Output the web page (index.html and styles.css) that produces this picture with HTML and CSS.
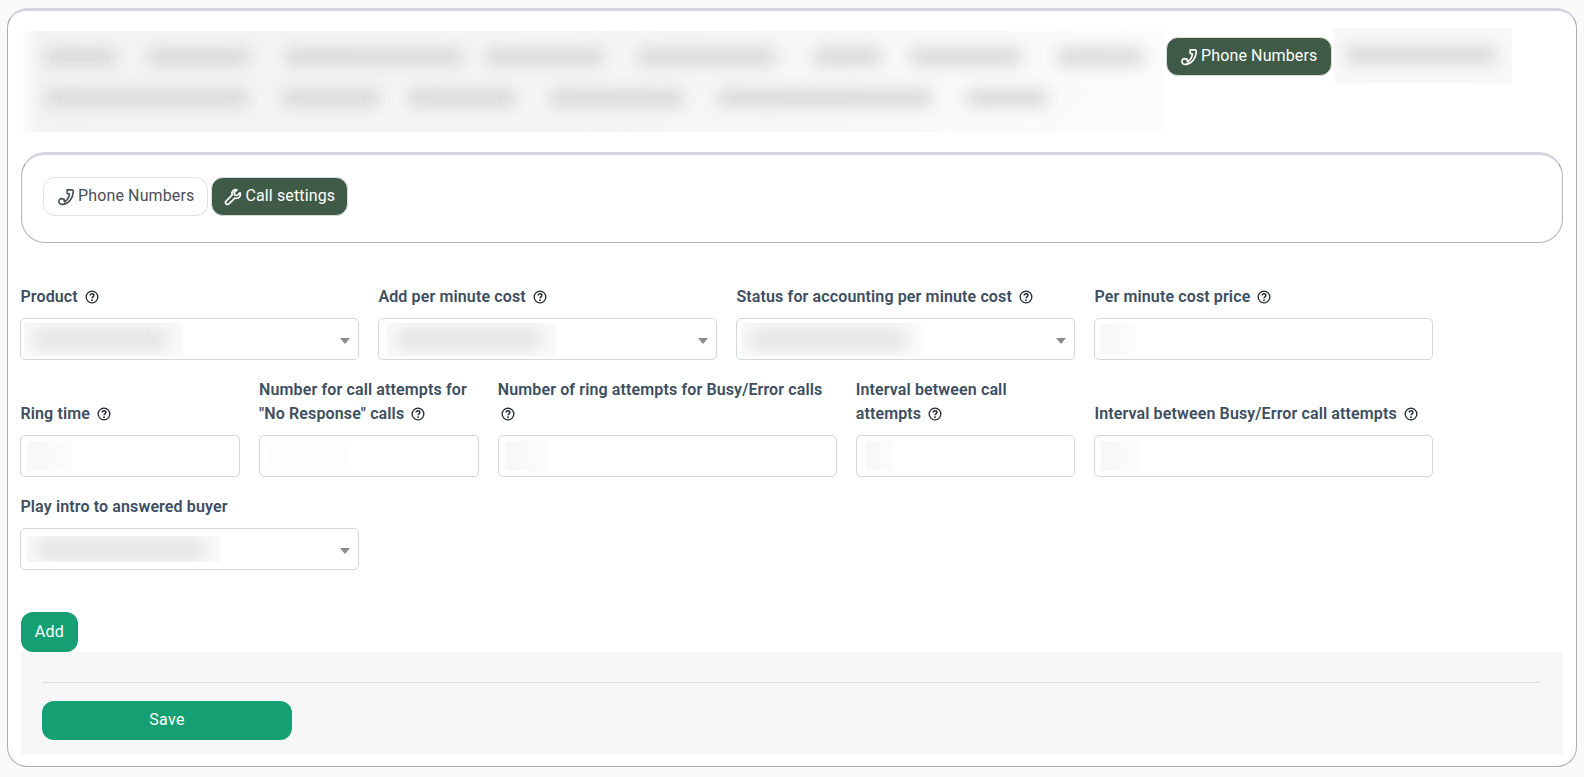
FILE: index.html
```html
<!DOCTYPE html>
<html lang="en">
<head>
<meta charset="utf-8">
<title>Phone Numbers - Call settings</title>
<link rel="stylesheet" href="styles.css">
</head>
<body>
<svg class="defs" width="0" height="0" aria-hidden="true">
  <symbol id="i-phone" viewBox="0 0 24 24"><path d="M13.500 2.500 19.500 2.300C21 2.300 21.800 3.300 21.700 4.800 21.300 13.500 15.800 20.800 8 21.800 4.500 22.200 2.200 20.400 2.600 17.500 2.800 16 3.500 14.900 4.700 14.200L9.300 14.600 10 18.300C13.600 16.500 16 12.500 16.600 8.200L13.700 7.400z" fill="none" stroke="currentColor" stroke-width="2.200" stroke-linejoin="round"/></symbol>
  <symbol id="i-wrench" viewBox="0 0 24 24"><path d="M21.500 6.300 17.500 10l-3.300-.6-.7-3.300 3.800-3.700c-3.100-1-6.400 1-6.700 4.200-.1.900 0 1.800.4 2.600L2.800 17.400c-1 1-1 2.600 0 3.700s2.700 1 3.700 0l8.300-7.800c.8.400 1.700.5 2.600.4 3.200-.3 5.200-3.400 4.100-7.400z" fill="none" stroke="currentColor" stroke-width="2.200" stroke-linejoin="round"/></symbol>
  <symbol id="i-help" viewBox="0 0 24 24"><circle cx="12" cy="12" r="10" fill="none" stroke="currentColor" stroke-width="2.200"/><path d="M8.800 9.500c0-1.900 1.400-3.100 3.200-3.100s3.200 1.200 3.200 2.900c0 2.400-3.200 2.500-3.200 5" fill="none" stroke="currentColor" stroke-width="2.400"/><circle cx="12" cy="17.500" r="1.500" fill="currentColor"/></symbol>
</svg>
<main class="card">
  <nav class="topnav">
    <div class="smudge-box" aria-hidden="true">
      <div class="smudge-row">
        <i class="sb w70"></i><i class="sb w100 g34"></i><i class="sb w176 g37"></i><i class="sb w116 g25"></i><i class="sb w136 g36"></i><i class="sb w66 g40"></i><i class="sb w110 g30"></i><i class="sb w86 g36"></i>
      </div>
      <div class="smudge-row">
        <i class="sb w202"></i><i class="sb w96 g36"></i><i class="sb w106 g30"></i><i class="sb w132 g36"></i><i class="sb w212 g36"></i><i class="sb w80 g36"></i>
      </div>
    </div>
    <a class="btn btn-dark nav-btn"><svg class="ico"><use href="#i-phone"/></svg><span class="btn-text">Phone Numbers</span></a>
    <div class="smudge-box-small" aria-hidden="true"><i class="sb w150"></i></div>
  </nav>

  <section class="panel">
    <a class="btn btn-light"><svg class="ico"><use href="#i-phone"/></svg><span class="btn-text">Phone Numbers</span></a>
    <a class="btn btn-dark"><svg class="ico"><use href="#i-wrench"/></svg><span class="btn-text">Call settings</span></a>
  </section>

  <form class="form-grid">
    <div class="field span3">
      <label class="lbl">Product <svg class="help"><use href="#i-help"/></svg></label>
      <div class="control"><span class="mask m-sel1"><i></i></span><span class="caret"></span></div>
    </div>
    <div class="field span3">
      <label class="lbl">Add per minute cost <svg class="help"><use href="#i-help"/></svg></label>
      <div class="control"><span class="mask m-sel2"><i></i></span><span class="caret"></span></div>
    </div>
    <div class="field span3">
      <label class="lbl">Status for accounting per minute cost <svg class="help"><use href="#i-help"/></svg></label>
      <div class="control"><span class="mask m-sel3"><i></i></span><span class="caret"></span></div>
    </div>
    <div class="field span3">
      <label class="lbl">Per minute cost price <svg class="help"><use href="#i-help"/></svg></label>
      <div class="control"><span class="mask faint m-in1"></span></div>
    </div>

    <div class="field span2">
      <label class="lbl">Ring time <svg class="help"><use href="#i-help"/></svg></label>
      <div class="control"><span class="mask faint m-in2"></span></div>
    </div>
    <div class="field span2">
      <label class="lbl">Number for call attempts for "No Response" calls <svg class="help"><use href="#i-help"/></svg></label>
      <div class="control"><span class="mask fainter m-in3"></span></div>
    </div>
    <div class="field span3">
      <label class="lbl">Number of ring attempts for Busy/Error calls <svg class="help"><use href="#i-help"/></svg></label>
      <div class="control"><span class="mask faint m-in4"></span></div>
    </div>
    <div class="field span2">
      <label class="lbl">Interval between call attempts <svg class="help"><use href="#i-help"/></svg></label>
      <div class="control"><span class="mask faint m-in5"></span></div>
    </div>
    <div class="field span3">
      <label class="lbl">Interval between Busy/Error call attempts <svg class="help"><use href="#i-help"/></svg></label>
      <div class="control"><span class="mask faint m-in6"></span></div>
    </div>

    <div class="field span3">
      <label class="lbl">Play intro to answered buyer</label>
      <div class="control"><span class="mask m-sel4"><i></i></span><span class="caret"></span></div>
    </div>
  </form>

  <button class="btn-green add-btn" type="button">Add</button>

  <footer class="actions">
    <hr class="rule">
    <button class="btn-green save-btn" type="button">Save</button>
  </footer>
</main>
</body>
</html>
```

FILE: styles.css
```css
* { box-sizing: border-box; }

html, body { margin: 0; height: 100%; }

body {
  background: #fafafa;
  padding: 8px 7px 0;
  font-family: Roboto, "Liberation Sans", sans-serif;
  color: #3a4b5c;
  overflow: hidden;
}

.defs { position: absolute; }

.card {
  width: 1570px;
  height: 759px;
  background: #fff;
  border: 1px solid #adadad;
  border-top: 3px solid #d4d6df;
  border-radius: 20px;
  padding: 17px 13px 0;
}

/* top navigation */
.topnav {
  display: flex;
  align-items: flex-start;
  height: 109px;
}

.smudge-box {
  width: 1141px;
  height: 101px;
  margin: 3px 2px 0 2px;
  background: linear-gradient(135deg, #f3f3f3 0%, #f5f5f5 55%, #fcfcfc 100%);
  box-shadow: inset 16px 0 12px -8px #fcfcfc;
  overflow: hidden;
  padding: 18px 22px 0;
}

.smudge-row {
  display: flex;
  height: 16px;
  margin-bottom: 25px;
}

.sb {
  display: block;
  height: 16px;
  background: #d6d6d6;
  filter: blur(8px);
  flex: none;
}

.w66 { width: 66px; } .w70 { width: 70px; } .w80 { width: 80px; } .w86 { width: 86px; }
.w96 { width: 96px; } .w100 { width: 100px; } .w106 { width: 106px; } .w110 { width: 110px; }
.w116 { width: 116px; } .w132 { width: 132px; } .w136 { width: 136px; } .w150 { width: 150px; }
.w176 { width: 176px; } .w202 { width: 202px; } .w212 { width: 212px; }
.g25 { margin-left: 25px; } .g30 { margin-left: 30px; } .g34 { margin-left: 34px; }
.g36 { margin-left: 36px; } .g37 { margin-left: 37px; } .g40 { margin-left: 40px; }

.smudge-box-small {
  width: 178px;
  height: 55px;
  margin-left: 2px;
  background: #f8f8f8;
  overflow: hidden;
  padding: 19px 12px 0;
}

/* buttons */
.btn {
  display: inline-flex;
  align-items: center;
  height: 39px;
  padding: 0 13px;
  border-radius: 12px;
  font-size: 16px;
  line-height: 1;
  flex: none;
}

.btn-text {
  letter-spacing: 0.13px;
  padding-bottom: 2px;
}

.btn-dark {
  background: #3f5b47;
  color: #fff;
  border: 1px solid #d8dcd9;
}

.btn-light {
  background: #fff;
  color: #4a4f55;
  border: 1px solid #dfdfe4;
}

.nav-btn {
  margin-top: 9px;
  padding-right: 14px;
}

.ico {
  width: 18px;
  height: 18px;
  margin-right: 3px;
  flex: none;
}

/* sub tabs panel */
.panel {
  display: flex;
  gap: 3px;
  height: 91px;
  margin-top: 15px;
  padding: 22px 21px 0;
  border: 1px solid #b4b4b8;
  border-top: 3px solid #d4d6df;
  border-radius: 24px;
}

.panel .btn-dark { padding: 0 12px; }

/* form */
.form-grid {
  display: grid;
  grid-template-columns: repeat(12, 1fr);
  column-gap: 19px;
  row-gap: 17px;
  width: 1413px;
  margin: 41px 0 0 -0.6px;
}

.field {
  display: flex;
  flex-direction: column;
  justify-content: flex-end;
}

.span2 { grid-column: span 2; }
.span3 { grid-column: span 3; }

.lbl {
  display: block;
  font-size: 16px;
  font-weight: 600;
  letter-spacing: 0.13px;
  line-height: 24px;
  padding-top: 1px;
  margin-bottom: 9px;
  color: #3d4e5f;
}

.help {
  width: 14px;
  height: 14px;
  margin-left: 3px;
  vertical-align: -2px;
  color: #20262c;
}

.control {
  display: flex;
  align-items: center;
  height: 42px;
  border: 1px solid #d4d6de;
  border-radius: 5px;
  background: #fff;
  overflow: hidden;
}

.caret {
  margin-left: auto;
  margin-right: 8px;
  margin-top: 4px;
  width: 0;
  height: 0;
  border-left: 5px solid transparent;
  border-right: 5px solid transparent;
  border-top: 6px solid #8a8a8a;
}

.mask {
  display: flex;
  align-items: center;
  height: 33px;
  background: #fafafa;
  overflow: hidden;
  flex: none;
}

.mask i {
  display: block;
  flex: 1;
  height: 18px;
  margin: 0 16px 0 10px;
  background: #dedede;
  filter: blur(9px);
}

.faint { background: linear-gradient(90deg, #f8f8f8, #fafafa 70%, #fdfdfd); height: 30px; }
.fainter { background: #fdfdfd; height: 28px; }

.m-sel1 { width: 159px; margin-left: 3px; }
.m-sel2 { width: 169px; margin-left: 8px; }
.m-sel3 { width: 180px; margin-left: 4px; }
.m-sel4 { width: 193px; margin-left: 6px; height: 26px; }
.m-in1 { width: 36px; margin-left: 5px; }
.m-in2 { width: 45px; margin-left: 6px; }
.m-in3 { width: 80px; margin-left: 8px; }
.m-in4 { width: 42px; margin-left: 6px; }
.m-in5 { width: 29px; margin-left: 9px; }
.m-in6 { width: 40px; margin-left: 6px; }

/* actions */
.btn-green {
  display: block;
  border: 0;
  background: #14a072;
  color: #fff;
  font-family: inherit;
  font-size: 16px;
  font-weight: 400;
  letter-spacing: 0.3px;
  border-radius: 12px;
  padding: 0 0 2px;
}

.add-btn {
  width: 57px;
  height: 40px;
  margin-top: 42px;
}

.actions {
  height: 102px;
  background: #f7f7f7;
  padding: 30px 23px 0 21px;
}

.rule {
  height: 1px;
  margin: 0;
  border: 0;
  background: #dcdcdc;
}

.save-btn {
  width: 250px;
  height: 39px;
  margin-top: 18px;
}
```
